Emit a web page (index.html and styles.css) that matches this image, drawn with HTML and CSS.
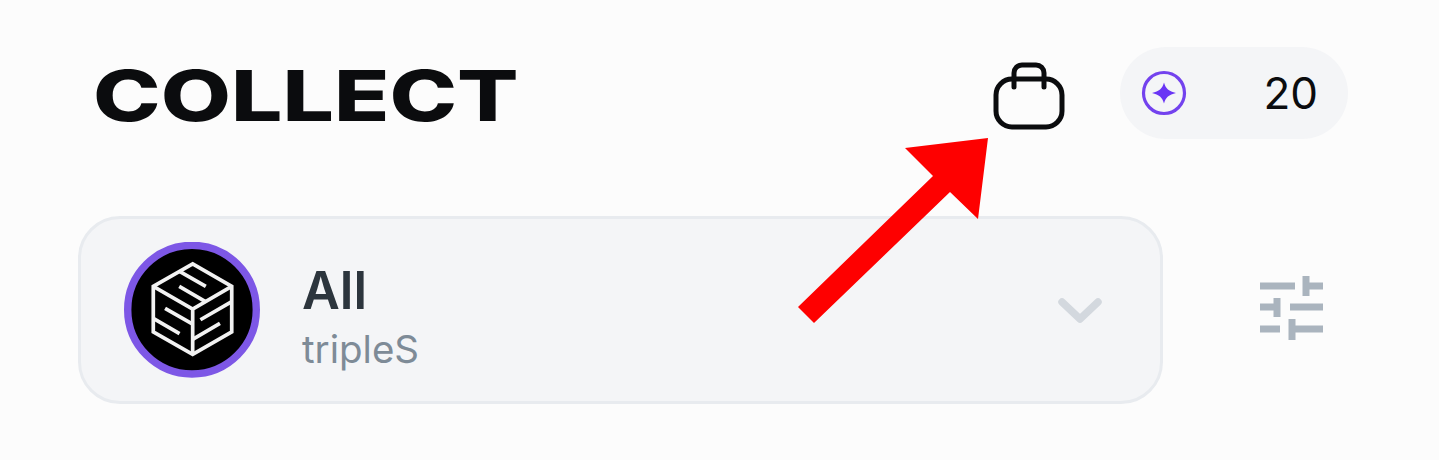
FILE: index.html
```html
<!DOCTYPE html>
<html lang="en">
<head>
    <meta charset="UTF-8">
    <meta name="viewport" content="width=device-width, initial-scale=1.0">
    <title>Collect</title>
    <link rel="stylesheet" href="styles.css">
</head>
<body>
    <div class="page">
        <header class="top-bar">
            <h1 class="page-title">COLLECT</h1>
            <div class="top-actions">
                <button class="bag-button" aria-label="Bag">
                    <svg width="72" height="68" viewBox="0 0 72 68" fill="none" stroke="#0b0c0e" stroke-width="5" stroke-linecap="round">
                        <rect x="3" y="17" width="66" height="48" rx="16"/>
                        <path d="M21 25V11a8 8 0 0 1 8-8h14a8 8 0 0 1 8 8v14"/>
                    </svg>
                </button>
                <div class="point-pill">
                    <svg width="46" height="46" viewBox="0 0 46 46">
                        <circle cx="23" cy="23" r="20.5" fill="none" stroke="#7342ee" stroke-width="3.2"/>
                        <path d="M23 12.5C24.5 18.5 28 21.5 35 23C28 24.5 24.5 27.5 23 33.5C21.5 27.5 18 24.5 11 23C18 21.5 21.5 18.5 23 12.5Z" fill="#6a35f5"/>
                    </svg>
                    <span class="point-count">20</span>
                </div>
            </div>
        </header>

        <div class="filter-row">
            <div class="artist-select">
                <svg class="artist-logo" width="136" height="136" viewBox="43 38 404 404">
                    <circle cx="245" cy="239" r="191" fill="#000" stroke="#7d57e6" stroke-width="22"/>
                    <g fill="none" stroke="#f2f2f2" stroke-width="11">
                        <path d="M247 103L363 170V305L247 372L130 305V170Z"/>
                        <path d="M130 170L247 237L363 170M247 237V372"/>
                        <path d="M208 125L286 170M285 215L207 170"/>
                        <path d="M165 235L247 282M130 265L208 310"/>
                        <path d="M270 269L363 215M247 327L328 280"/>
                    </g>
                </svg>
                <div class="artist-text">
                    <span class="artist-name">All</span>
                    <span class="artist-group">tripleS</span>
                </div>
                <svg class="chevron" width="44" height="25" viewBox="0 0 44 25" fill="none" stroke="#d3d8de" stroke-width="7.5" stroke-linecap="round" stroke-linejoin="round">
                    <path d="M4 4L22 21L40 4"/>
                </svg>
            </div>
            <button class="filter-button" aria-label="Filters">
                <svg width="66" height="66" viewBox="0 0 66 66" fill="none" stroke="#aab4be" stroke-width="7">
                    <path d="M1 11H36M47 1V21M47 11H64"/>
                    <path d="M1 32H21M18 23V42M31 32H64"/>
                    <path d="M1 54H21M33 44V65M33 54H64"/>
                </svg>
            </button>
        </div>
    </div>

    <svg class="red-arrow" width="192" height="187" viewBox="798 138 192 187">
        <path d="M798 307L814 323L950 192L978 219L988 138L905 148L933 176Z" fill="#fe0000"/>
    </svg>
</body>
</html>
```

FILE: styles.css
```css
body {
    margin: 0;
    background-color: #fcfcfc;
    font-family: Inter, "Liberation Sans", sans-serif;
}
button {
    padding: 0;
    border: none;
    background: none;
    cursor: pointer;
}
svg {
    display: block;
}
.page {
    padding: 47px 91px 0 78px;
}
.top-bar {
    display: flex;
    justify-content: space-between;
    align-items: center;
    height: 92px;
}
.page-title {
    margin: 6px 0 0 15px;
    font-size: 70px;
    font-weight: 800;
    line-height: 1;
    color: #0b0c0e;
    transform: scaleX(1.3);
    transform-origin: left center;
}
.top-actions {
    display: flex;
    align-items: center;
    gap: 55px;
}
.bag-button {
    margin-top: 5px;
}
.point-pill {
    display: flex;
    justify-content: space-between;
    align-items: center;
    box-sizing: border-box;
    width: 228px;
    height: 92px;
    padding: 0 30px 0 21px;
    border-radius: 46px;
    background-color: #f4f5f7;
}
.point-count {
    font-size: 44px;
    color: #0b0c0e;
}
.filter-row {
    display: flex;
    align-items: center;
    margin-top: 77px;
}
.artist-select {
    display: flex;
    align-items: center;
    box-sizing: border-box;
    width: 1085px;
    height: 188px;
    padding: 0 58px 0 43px;
    border: 3px solid #e8ebef;
    border-radius: 42px;
    background-color: #f4f5f7;
}
.artist-logo {
    flex-shrink: 0;
}
.artist-text {
    display: flex;
    flex-direction: column;
    flex: 1;
    margin-left: 42px;
    padding-top: 16px;
}
.artist-name {
    font-size: 52px;
    font-weight: 600;
    line-height: 62px;
    color: #2c353d;
}
.artist-group {
    font-size: 38.5px;
    line-height: 54px;
    color: #7e8b97;
}
.filter-button {
    margin-left: 96px;
    margin-bottom: 4px;
}
.red-arrow {
    position: absolute;
    left: 798px;
    top: 138px;
}
```
